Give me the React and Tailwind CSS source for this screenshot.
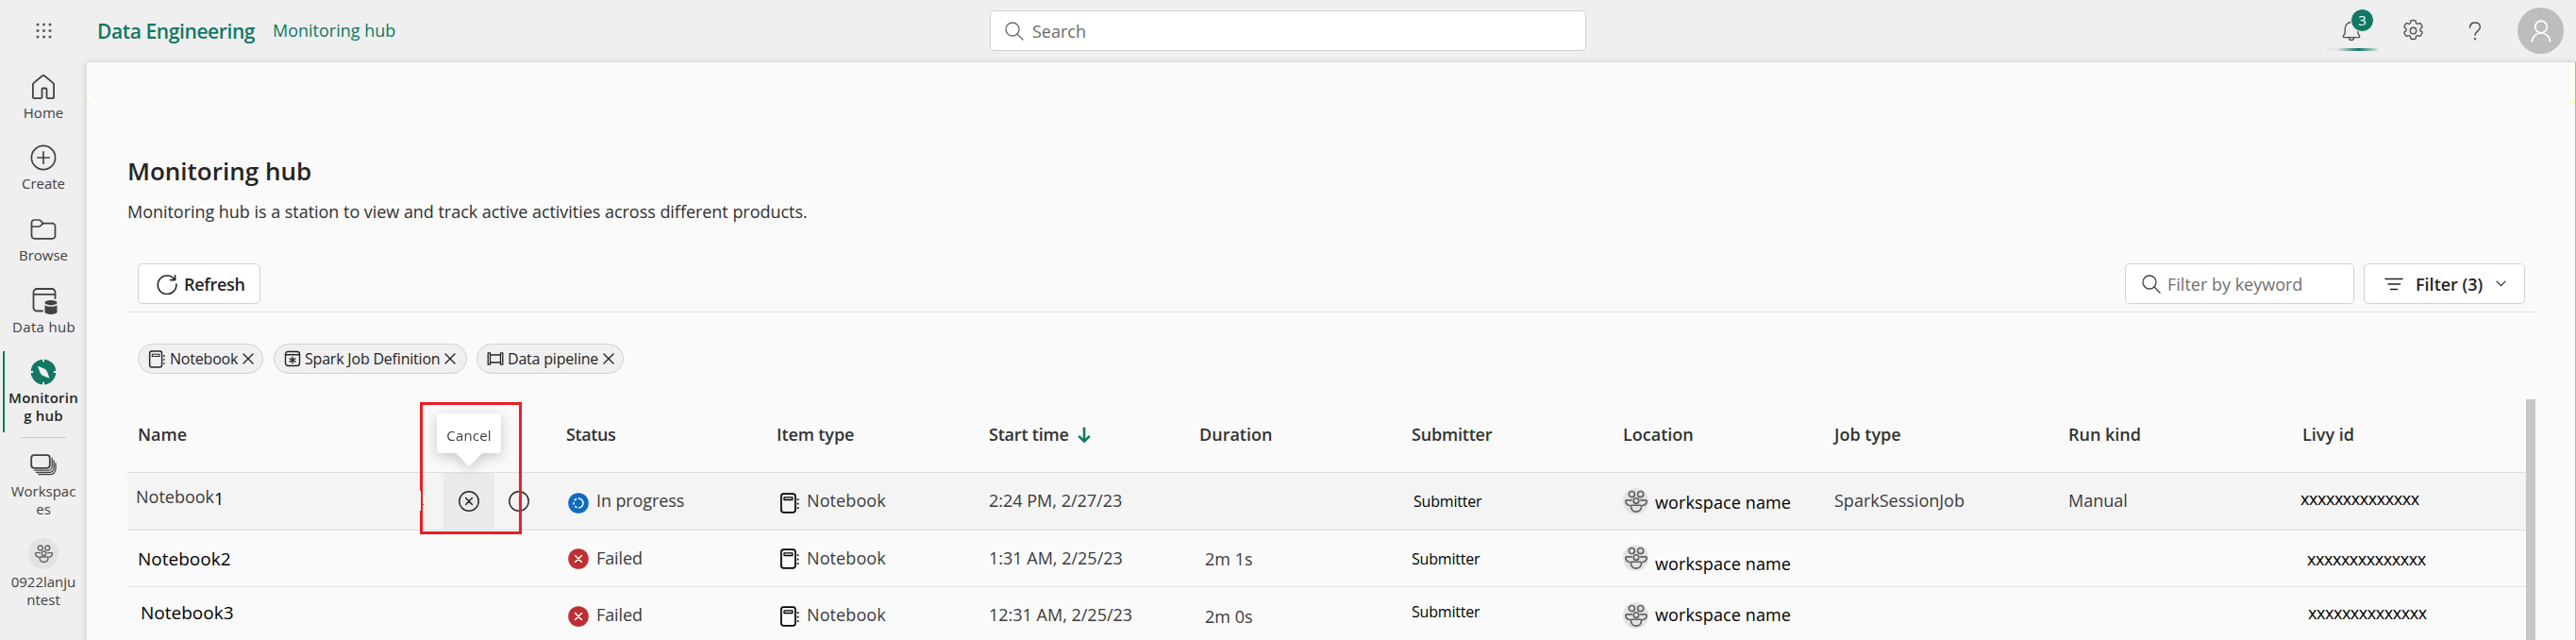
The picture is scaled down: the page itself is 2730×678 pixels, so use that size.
import React from "react";

/* ---------- icons ---------- */

function Icon({ box = 24, className = "", sw = 1.5, children }) {
  return (
    <svg viewBox={`0 0 ${box} ${box}`} fill="none" stroke="currentColor" strokeWidth={sw} strokeLinecap="round" strokeLinejoin="round" className={`block shrink-0 ${className}`}>
      {children}
    </svg>
  );
}

const HomeIcon = () => (
  <Icon box={28} sw={1.8} className="size-7">
    <path d="M2.9 11.6c0-.7.3-1.3.8-1.7l8.9-7.4c.8-.7 2-.7 2.8 0l8.9 7.4c.5.4.8 1 .8 1.7V25c0 .7-.5 1.2-1.2 1.2h-5.200c-.7 0-1.200-.5-1.200-1.200v-8.300c0-.7-.5-1.200-1.200-1.200h-2.600c-.7 0-1.200.5-1.200 1.200V25c0 .7-.5 1.200-1.200 1.200H4.100c-.7 0-1.200-.5-1.200-1.200z" />
  </Icon>
);
const CreateIcon = () => (
  <Icon box={28} sw={1.7} className="size-7">
    <circle cx="14" cy="14" r="12.6" />
    <path d="M14 7.800v12.400M7.800 14h12.400" />
  </Icon>
);
const BrowseIcon = () => (
  <Icon box={28} sw={1.7} className="size-7">
    <path d="M1.500 7.200A3 3 0 0 1 4.500 4h4.700c.6 0 1.200.3 1.600.7l2.900 2.900h9.800a3 3 0 0 1 3 3v10.200a3 3 0 0 1-3 3h-19a3 3 0 0 1-3-3z" />
    <path d="M1.500 11h7.700c.6 0 1.200-.2 1.600-.7l2.900-2.700" />
  </Icon>
);
const DataHubIcon = () => (
  <Icon box={28} sw={1.8} className="size-7">
    <path d="M12 24.500H6a3.500 3.500 0 0 1-3.500-3.500V4.500A3.500 3.500 0 0 1 6 1h16a3.500 3.500 0 0 1 3.500 3.500V11M2.500 6.800h23" />
    <g fill="currentColor" stroke="none">
      <ellipse cx="21" cy="15.700" rx="6.500" ry="2.700" />
      <path d="M14.500 18.200c2.500 2 10.500 2 13 0v7c0 3.600-13 3.600-13 0z" />
    </g>
  </Icon>
);
const MonitorIcon = () => (
  <svg viewBox="0 0 28 28" className="block size-7 shrink-0">
    <circle cx="14" cy="14" r="13.300" fill="#117865" />
    <path d="M14 0v2.400M14 25.600V28M0 14h2.400M25.600 14H28" stroke="#efefef" strokeWidth="2" strokeLinecap="round" />
    <path d="M8.300 8.900c-.2-.6.200-1 .8-.8l5.600 2.300c1.500.6 2.600 1.700 3.200 3.200l2.200 6c.2.600-.2 1-.8.800l-5.600-2.400a5.500 5.500 0 0 1-3.200-3.300z" fill="#efefef" />
  </svg>
);
const WorkspacesIcon = () => (
  <Icon box={28} sw={1.8} className="size-7">
    <rect x="1.200" y="3.200" width="19.600" height="13.600" rx="3" />
    <path d="M23.200 6.500v8.700a4 4 0 0 1-4 4H4.500M25.200 9v7.500a5 5 0 0 1-5 5H6.500M27 11.800v5.900a6 6 0 0 1-6 6H9" strokeWidth="1.300" />
  </Icon>
);
const PeopleIcon = ({ className }) => (
  <Icon box={28} sw={1.800} className={className}>
    <circle cx="9" cy="6" r="3.300" />
    <circle cx="19" cy="6" r="3.300" />
    <circle cx="14" cy="13.500" r="3" />
    <path d="M8.700 12.800H3.200c-.8 0-1.300.6-1.200 1.300.3 2.600 2 4.300 4.600 4.700M19.300 12.800h5.500c.8 0 1.300.6 1.200 1.300-.3 2.600-2 4.300-4.600 4.700M8 19.700c0-.6.500-1.100 1.100-1.100h9.800c.6 0 1.100.5 1.100 1.100 0 3.700-2.300 6.300-6 6.300s-6-2.600-6-6.300z" />
  </Icon>
);
const NotebookIcon = ({ className }) => (
  <Icon box={22} sw={1.700} className={className}>
    <rect x="1.900" y="1.200" width="15" height="19.600" rx="2.600" />
    <path d="M5 4.900h8.800v2.600H5z" strokeWidth="1.300" />
    <path d="M19.600 6.200v1.800M19.600 10.700v1.800M19.600 15.200V17" strokeWidth="1.700" strokeLinecap="butt" />
  </Icon>
);
const SparkIcon = () => (
  <Icon box={18} sw={1.400} className="size-[18px]">
    <rect x="1.500" y="1.500" width="15" height="15" rx="2.800" />
    <path d="M1.500 4.700h15M9 7.200v6.600M6.100 8.800l5.800 3.400M11.900 8.800l-5.800 3.400" />
  </Icon>
);
const PipelineIcon = () => (
  <Icon box={18} sw={1.300} className="size-[18px]">
    <path d="M1.200 2.800v12.400M3.500 2.800v12.400M14.500 2.800v12.400M16.800 2.800v12.400M1.200 2.800h2.300M1.200 15.200h2.300M14.500 2.800h2.300M14.500 15.200h2.300M3.500 5h11M3.500 13h11" />
  </Icon>
);
const CloseIcon = () => (
  <Icon box={12} sw={1.400} className="size-3">
    <path d="M1 1l10 10M11 1L1 11" />
  </Icon>
);
const SearchIcon = ({ className }) => (
  <Icon box={20} sw={1.300} className={className}>
    <circle cx="8" cy="8" r="7" />
    <path d="M13 13l6 6" />
  </Icon>
);
const RefreshIcon = () => (
  <Icon box={22} sw={1.600} className="size-[22px]">
    <path d="M19.200 6.400A9.800 9.800 0 1 0 20.800 11M19.600 1.700v4.900h-5" />
  </Icon>
);
const BellIcon = () => (
  <Icon box={22} sw={1.300} className="size-[22px]">
    <path d="M11 1.500a6.800 6.800 0 0 0-6.800 6.800v4.300l-1.900 4c-.2.500.1 1 .6 1h16.200c.5 0 .8-.5.600-1l-1.900-4V8.300A6.800 6.800 0 0 0 11 1.500zM8.300 17.800a2.700 2.700 0 0 0 5.400 0" />
  </Icon>
);
const GearIcon = () => (
  <Icon box={24} sw={1.300} className="size-[25px] text-[#505050]">
    <circle cx="12" cy="12" r="3.100" />
    <path d="M12 1.300l1.900.2c.3 0 .5.300.6.600l.2 1.500a1.700 1.700 0 0 0 2.300 1.400l1.400-.6c.3-.1.600-.1.800.2a10.500 10.500 0 0 1 2 3.300c.1.300 0 .6-.2.800l-1.300.9a1.700 1.700 0 0 0 0 2.800l1.300.9c.2.200.3.500.2.800a10.500 10.500 0 0 1-2 3.300c-.2.300-.5.300-.8.200l-1.400-.6a1.700 1.700 0 0 0-2.300 1.400l-.2 1.500c0 .3-.3.500-.6.600a10.300 10.300 0 0 1-3.800 0c-.3-.1-.5-.3-.6-.6l-.2-1.500A1.700 1.700 0 0 0 7 17l-1.400.6c-.3.100-.6.100-.8-.2a10.500 10.500 0 0 1-2-3.300c-.1-.3 0-.6.200-.8l1.300-.9a1.700 1.700 0 0 0 0-2.800L3 8.700c-.2-.2-.3-.5-.2-.8a10.500 10.500 0 0 1 2-3.300c.2-.3.500-.3.800-.2L7 5a1.700 1.700 0 0 0 2.300-1.400l.2-1.500c0-.3.300-.5.600-.6z" />
  </Icon>
);
const HelpIcon = () => (
  <svg viewBox="0 0 14 20" className="block h-5 w-3.5 shrink-0" fill="none" stroke="#505050" strokeWidth="1.400" strokeLinecap="round">
    <path d="M1.500 6.200C1.500 3 3.800 1 7 1s5.400 2 5.400 4.900c0 3.600-5.400 4.400-5.400 8.400" />
    <circle cx="7" cy="18.300" r=".5" fill="#505050" />
  </svg>
);
const PersonIcon = () => (
  <svg viewBox="0 0 22 24" className="block h-6 w-[22px]" fill="none" stroke="#ffffff" strokeWidth="1.700">
    <circle cx="11" cy="7.500" r="6.300" />
    <path d="M1.500 23.500c0-5.600 4.200-9.500 9.500-9.500s9.500 3.900 9.500 9.500" />
  </svg>
);
const GridIcon = () => (
  <svg viewBox="0 0 17 17" className="block size-[17px]" fill="#5f5f5f">
    {[2, 8.5, 15].map((y) => [2, 8.5, 15].map((x) => <circle key={`${x}-${y}`} cx={x} cy={y} r="1.550" />))}
  </svg>
);
const FilterIcon = () => (
  <Icon box={20} sw={1.500} className="size-5">
    <path d="M1 4.500h18M4 10h12.500M6.500 15.500h7" />
  </Icon>
);
const ChevronIcon = () => (
  <Icon box={11} sw={1.200} className="size-[11px]">
    <path d="M1 3.200l4.500 4.500L10 3.200" />
  </Icon>
);
const SortIcon = () => (
  <svg viewBox="0 0 14 18" className="mt-1 ml-[9px] block h-[18px] w-3.5" fill="none" stroke="#117865" strokeWidth="2.600">
    <path d="M7 .8v14.600M1.200 9.800L7 15.600l5.800-5.800" />
  </svg>
);
const CircleXIcon = () => (
  <Icon box={22} sw={1.400} className="size-[22px]">
    <circle cx="11" cy="11" r="10.200" />
    <path d="M7.600 7.600l6.800 6.800M14.400 7.600l-6.800 6.800" />
  </Icon>
);
const InfoIcon = () => (
  <Icon box={22} sw={1.400} className="size-[22px]">
    <circle cx="11" cy="11" r="10.200" />
    <path d="M11 10v5.500M11 6.600v.2" stroke="#dddddd" />
  </Icon>
);
const FailedIcon = () => (
  <svg viewBox="0 0 22 22" className="block size-[22px] shrink-0" fill="none">
    <circle cx="11" cy="11" r="10.800" fill="#bc2f32" />
    <path d="M7.500 7.500l7 7M14.500 7.500l-7 7" stroke="#ffffff" strokeWidth="1.500" strokeLinecap="round" />
  </svg>
);
const ProgressIcon = () => (
  <svg viewBox="0 0 22 22" className="block size-[22px] shrink-0" fill="none">
    <circle cx="11" cy="11" r="10.800" fill="#0f6cbd" />
    <path d="M11 6a5 5 0 0 1 0 10" stroke="#ffffff" strokeWidth="1.500" />
    <path d="M11 16a5 5 0 0 1 0-10" stroke="#ffffff" strokeWidth="1.500" strokeDasharray="2.600 1.900" strokeDashoffset="-1.500" />
  </svg>
);

/* ---------- top bar ---------- */

function TopBar() {
  return (
    <header className="flex h-[65px] shrink-0 items-start">
      <div className="flex h-[65px] w-[92px] shrink-0 justify-center pt-6">
        <GridIcon />
      </div>
      <div className="flex w-[957px] shrink-0 pt-5 pl-[11px] text-[#117865]">
        <span className="w-[186px] text-[21px] leading-[26px] font-semibold tracking-[-0.4px]">Data Engineering</span>
        <span className="leading-6">Monitoring hub</span>
      </div>
      <div className="mt-[11px] flex h-[43px] w-[632px] shrink-0 items-center rounded-[5px] border border-[#d1d1d1] bg-white pl-[15px] text-[#6b6b6b]">
        <SearchIcon className="size-5" />
        <span className="ml-[9px] leading-6">Search</span>
      </div>
      <div className="ml-[785px] flex shrink-0">
        <div className="relative flex w-[54px] flex-col pt-[22px] pl-[15px] text-[#505050]">
          <BellIcon />
          <span className="absolute top-[9px] left-[25px] flex size-[25px] items-center justify-center rounded-full border border-[#f7f7f7] bg-[#117865] text-[15px] leading-none text-white">3</span>
          <span className="mt-[7px] -ml-[15px] h-[3px] w-[54px] bg-[linear-gradient(90deg,#e6e6e6_20%,#117865_62%,#d4e2df_100%)]" />
        </div>
        <div className="mt-5 ml-[25px]"><GearIcon /></div>
        <div className="mt-[23px] ml-[46px]"><HelpIcon /></div>
        <div className="mt-2 ml-[38px] flex size-[49px] items-center justify-center rounded-full bg-[#bdbdbd]">
          <PersonIcon />
        </div>
      </div>
    </header>
  );
}

/* ---------- side navigation ---------- */

function NavItem({ icon, lines, className = "" }) {
  return (
    <a className={`flex flex-col items-center ${className}`}>
      {icon}
      <span className="mt-1 flex flex-col items-center whitespace-nowrap">
        {lines.map((l) => <span key={l}>{l}</span>)}
      </span>
    </a>
  );
}

function SideNav() {
  return (
    <nav className="flex w-[92px] shrink-0 flex-col text-[15px] leading-[19px] text-[#424242]">
      <NavItem className="h-[75px] pt-[13px]" icon={<HomeIcon />} lines={["Home"]} />
      <NavItem className="h-[76px] pt-[13px]" icon={<CreateIcon />} lines={["Create"]} />
      <NavItem className="h-[75px] pt-[13px]" icon={<BrowseIcon />} lines={["Browse"]} />
      <NavItem className="h-[81px] pt-[14px] pl-px tracking-[0.3px]" icon={<DataHubIcon />} lines={["Data hub"]} />
      <div className="flex h-[86px]">
        <span className="ml-[3px] w-[2px] bg-[#117865]" />
        <NavItem className="w-[82px] pt-2 font-semibold tracking-[0.2px] text-[#242424]" icon={<MonitorIcon />} lines={["Monitorin", "g hub"]} />
      </div>
      <span className="mx-auto mt-[5px] h-px w-12 bg-[#c7c7c7]" />
      <NavItem className="h-[106px] pt-[15px]" icon={<WorkspacesIcon />} lines={["Workspac", "es"]} />
      <NavItem
        icon={<span className="flex h-[33px] w-8 items-center justify-center rounded-full bg-[#e3e3e3] text-[#616161]"><PeopleIcon className="size-[21px]" /></span>}
        lines={["0922lanju", "ntest"]}
      />
    </nav>
  );
}

/* ---------- main panel ---------- */

function Chip({ icon, label, className }) {
  return (
    <span className={`flex h-8 items-center rounded-full border border-[#d1d1d1] bg-[#f0f0f0] pl-[10px] text-base leading-6 tracking-[-0.2px] text-[#242424] ${className}`}>
      {icon}
      <span className="mr-[5px] ml-[4px] whitespace-nowrap">{label}</span>
      <CloseIcon />
    </span>
  );
}

const COLS = "grid grid-cols-[465px_224px_224px_224px_224px_224px_224px_249px_247px_237px]";

function HeaderRow() {
  return (
    <div className={`${COLS} h-[77px] pt-[25px] leading-6 font-semibold text-[#323232]`}>
      <span className="pl-[11px]">Name</span>
      <span className="tracking-[-0.4px]">Status</span>
      <span className="-ml-px tracking-[-0.1px]">Item type</span>
      <span className="flex"><span className="tracking-[-0.2px]">Start time</span><SortIcon /></span>
      <span className="-ml-px">Duration</span>
      <span className="tracking-[-0.2px]">Submitter</span>
      <span>Location</span>
      <span>Job type</span>
      <span className="-ml-px">Run kind</span>
      <span>Livy id</span>
    </div>
  );
}

function Row({ className, icon, statusIcon, status, statusPad, iconPad, textPad, start, duration, submitter, workspace, job, run, livy, children }) {
  return (
    <div className={`${COLS} border-t border-[#dedede] leading-6 text-[#3b3b3b] ${className}`}>
      {children}
      <div className="flex pl-[2px]">
        <span className={statusPad}>{statusIcon}</span>
        <span className={`ml-2 tracking-[-0.1px] ${textPad}`}>{status}</span>
      </div>
      <div className="flex pl-[2px] text-black">
        <span className={iconPad}><NotebookIcon className="size-[22px]" /></span>
        <span className={`ml-[7px] tracking-[0.1px] text-[#3b3b3b] ${textPad}`}>Notebook</span>
      </div>
      <span className={textPad}>{start}</span>
      <span className={`pl-[5px] ${duration[1]}`}>{duration[0]}</span>
      <span className={`text-base leading-6 tracking-[-0.2px] text-black ${submitter}`}>Submitter</span>
      <div className="flex text-black">
        <span className={icon}>
          <span className="flex h-[28px] w-[27px] items-center justify-center rounded-full bg-[#e3e3e3] text-[#616161]"><PeopleIcon className="size-[26px]" /></span>
        </span>
        <span className={`ml-[7px] tracking-[0.12px] ${workspace}`}>workspace name</span>
      </div>
      <span className={textPad}>{job}</span>
      <span className={`-ml-px ${textPad}`}>{run}</span>
      <span className={`tracking-[-0.45px] text-black ${livy}`}>xxxxxxxxxxxxxx</span>
    </div>
  );
}

function Table() {
  return (
    <div className="mt-[27px] flex h-[256px]">
      <div className="w-[2542px] shrink-0">
        <HeaderRow />
        <Row
          className="h-[61px] bg-[#f4f4f4]"
          statusIcon={<ProgressIcon />} status="In progress" statusPad="pt-[21px]" iconPad="pt-[21px]" textPad="pt-[17px]"
          start="2:24 PM, 2/27/23" duration={["", ""]} submitter="pt-[18px] pl-[2px]"
          icon="pt-4" workspace="pt-[19px]" job="SparkSessionJob" run="Manual" livy="-ml-[2px] pt-[15px]"
        >
          <div className="relative flex pl-[9px]">
            <span className="pt-[13px]">Notebook</span><span className="pt-[15px] text-black">1</span>
            <span className="absolute top-0 left-[335px] flex h-[60px] w-[54px] items-center justify-center bg-[#eaeaea] text-[#242424]"><CircleXIcon /></span>
            <span className="absolute top-[19px] left-[404px] text-[#242424]"><InfoIcon /></span>
            <span className="absolute top-[33px] left-[313px] size-px bg-[#424242]" />
            <span className="absolute -top-[75px] left-[310px] h-[140px] w-[108px] border-[3px] border-[#ee1c25]" />
            <span className="absolute top-[19px] left-[310px] h-[21px] w-px bg-[#f4f4f4]" />
            <div className="absolute -top-[63px] left-[328px] flex h-[56px] w-[68px] flex-col items-center text-[#424242] drop-shadow-[0_4px_7px_rgba(0,0,0,0.2)]">
              <span className="flex h-[42px] w-[68px] items-center justify-center rounded-[4px] bg-white pt-[3px] text-[15px] tracking-[0.15px]">Cancel</span>
              <svg viewBox="0 0 28 14" className="block h-3.5 w-7"><path d="M0 0h28L16 12.200q-2 2-4 0z" fill="#ffffff" /></svg>
            </div>
          </div>
        </Row>
        <Row
          className="h-[60px]"
          statusIcon={<FailedIcon />} status="Failed" statusPad="pt-[19px]" iconPad="pt-[19px]" textPad="pt-[17px]"
          start="1:31 AM, 2/25/23" duration={["2m 1s", "pt-[18px]"]} submitter="pt-[18px]"
          icon="pt-[15px]" workspace="pt-[23px]" livy="pl-[5px] pt-[18px]"
        >
          <span className="pt-[18px] pl-[11px] text-[19px] text-black">Notebook2</span>
        </Row>
        <Row
          className="h-[58px]"
          statusIcon={<FailedIcon />} status="Failed" statusPad="pt-[20px]" iconPad="pt-[20px]" textPad="pt-[17px]"
          start="12:31 AM, 2/25/23" duration={["2m 0s", "pt-[19px]"]} submitter="pt-[14px]"
          icon="pt-4" workspace="pt-[17px]" livy="pl-[6px] pt-[15px]"
        >
          <span className="pt-[15px] pl-[14px] text-[19px] text-black">Notebook3</span>
        </Row>
      </div>
      <div className="h-[256px] w-2.5 bg-[#c6c6c6]" />
    </div>
  );
}

function Main() {
  return (
    <main className="relative h-[613px] grow border-t border-[#dcdcdc] bg-[#fafafa] pl-[43px] shadow-[0_2px_7px_rgba(0,0,0,0.2)]">
      <span className="absolute top-0 left-0 h-[43px] w-[2px] border-b border-[#fdf59a] bg-[#fffff0]" />
      <span className="absolute top-0 right-px h-[43px] w-[6px] border-b border-[#fdf59a] bg-[#fffff0]" />
      <span className="absolute top-0 right-0 h-[613px] w-px bg-[#b4b4b4]" />
      <h1 className="pt-[97px] text-[26px] leading-9 font-semibold text-[#242424]">Monitoring hub</h1>
      <p className="mt-[13px] leading-6 tracking-[-0.035px] text-[#323130]">Monitoring hub is a station to view and track active activities across different products.</p>
      <div className="mt-[43px] flex h-[52px] w-[2552px] items-start border-b border-[#dedede] pl-[11px] leading-6">
        <button className="flex h-[43px] w-[130px] items-center rounded-[5px] border border-[#d1d1d1] bg-white pl-[19px] font-semibold tracking-[-0.3px] text-[#242424]">
          <RefreshIcon />
          <span className="ml-[7px]">Refresh</span>
        </button>
        <div className="ml-auto flex h-[43px] w-[243px] items-center rounded-[5px] border border-[#d1d1d1] bg-white pl-[17px] text-[#707070]">
          <SearchIcon className="size-5 text-[#424242]" />
          <span className="ml-[7px]">Filter by keyword</span>
        </div>
        <button className="mr-[11px] ml-[10px] flex h-[43px] w-[171px] items-center rounded-[5px] border border-[#d1d1d1] bg-white pl-[21px] font-semibold text-[#242424]">
          <FilterIcon />
          <span className="mr-[14px] ml-[13px]">Filter (3)</span>
          <ChevronIcon />
        </button>
      </div>
      <div className="mt-[33px] flex pl-[11px]">
        <Chip className="w-[133px]" icon={<NotebookIcon className="size-[19px]" />} label="Notebook" />
        <Chip className="ml-[11px] w-[205px]" icon={<SparkIcon />} label="Spark Job Definition" />
        <Chip className="ml-[10px] w-[156px]" icon={<PipelineIcon />} label="Data pipeline" />
      </div>
      <Table />
    </main>
  );
}

export default function App() {
  return (
    <div className="flex h-[678px] w-[2730px] flex-col overflow-hidden bg-[#efefef] font-['Open_Sans','Noto_Sans',sans-serif] text-[18px]">
      <TopBar />
      <div className="flex h-[613px]">
        <SideNav />
        <Main />
      </div>
    </div>
  );
}
